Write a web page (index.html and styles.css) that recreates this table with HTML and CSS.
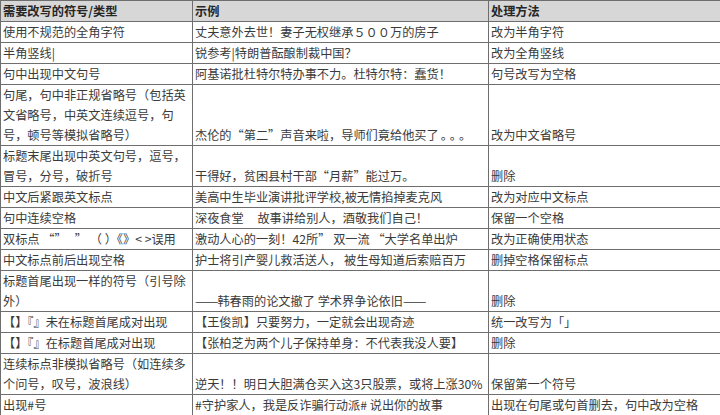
FILE: index.html
```html
<!DOCTYPE html>
<html lang="zh-CN">
<head>
<meta charset="utf-8">
<link rel="stylesheet" href="styles.css">
</head>
<body>
<table class="rules">
  <colgroup>
    <col class="c1"><col class="c2"><col class="c3">
  </colgroup>
  <thead>
    <tr class="head"><th>需要改写的符号/类型</th><th>示例</th><th>处理方法</th></tr>
  </thead>
  <tbody>
    <tr><td>使用不规范的全角字符</td><td>丈夫意外去世！妻子无权继承５００万的房子</td><td>改为半角字符</td></tr>
    <tr><td>半角竖线|</td><td>锐参考|特朗普酝酿制裁中国？</td><td>改为全角竖线</td></tr>
    <tr><td>句中出现中文句号</td><td>阿基诺批杜特尔特办事不力。杜特尔特：蠢货！</td><td>句号改写为空格</td></tr>
    <tr><td>句尾，句中非正规省略号（包括英<br>文省略号，中英文连续逗号，句<br>号，顿号等模拟省略号）</td><td>杰伦的“第二”声音来啦，导师们竟给他买了<span class="wide">。。。</span></td><td>改为中文省略号</td></tr>
    <tr><td>标题末尾出现中英文句号，逗号，<br>冒号，分号，破折号</td><td>干得好，贫困县村干部“月薪”能过万。</td><td>删除</td></tr>
    <tr><td>中文后紧跟英文标点</td><td>美高中生毕业演讲批评学校,被无情掐掉麦克风</td><td>改为对应中文标点</td></tr>
    <tr><td>句中连续空格</td><td>深夜食堂&nbsp;&nbsp;&nbsp;&nbsp;&nbsp;故事讲给别人，酒敬我们自己！</td><td>保留一个空格</td></tr>
    <tr><td>双标点 “”&nbsp;&nbsp;&nbsp;” （ ）《》&lt; &gt;误用</td><td>激动人心的一刻！42所” 双一流 “大学名单出炉</td><td>改为正确使用状态</td></tr>
    <tr><td>中文标点前后出现空格</td><td>护士将引产婴儿救活送人， 被生母知道后索赔百万</td><td>删掉空格保留标点</td></tr>
    <tr><td>标题首尾出现一样的符号（引号除<br>外）</td><td><span class="dash">——</span>韩春雨的论文撤了 学术界争论依旧<span class="dash">——</span></td><td>删除</td></tr>
    <tr><td>【】『』未在标题首尾成对出现</td><td>【王俊凯】只要努力，一定就会出现奇迹</td><td>统一改写为「」</td></tr>
    <tr><td>【】『』在标题首尾成对出现</td><td>【张柏芝为两个儿子保持单身：不代表我没人要】</td><td>删除</td></tr>
    <tr><td>连续标点非模拟省略号（如连续多<br>个问号，叹号，波浪线）</td><td>逆天！！明日大胆满仓买入这3只股票，或将上涨30%</td><td>保留第一个符号</td></tr>
    <tr><td>出现#号</td><td>#守护家人，我是反诈骗行动派# 说出你的故事</td><td>出现在句尾或句首删去，句中改为空格</td></tr>
  </tbody>
</table>
</body>
</html>
```
FILE: styles.css
```css
html, body {
  margin: 0;
  padding: 0;
  background: #ffffff;
}
body {
  width: 720px;
  height: 415px;
  overflow: hidden;
  font-family: "Noto Sans CJK SC", "Noto Sans", sans-serif;
  font-size: 12.2px;
  color: #3a3a3a;
}
.rules {
  border-collapse: collapse;
  table-layout: fixed;
  width: 720px;
}
.c1 { width: 192px; }
.c2 { width: 296px; }
.c3 { width: 232px; }
.rules th,
.rules td {
  border: 1px solid #6e6e6e;
  padding: 0 0 0 2px;
  line-height: 20px;
  height: 20px;
  white-space: nowrap;
  overflow: hidden;
  text-align: left;
  vertical-align: bottom;
}
.head th {
  background: #d7d7d7;
  font-weight: bold;
  color: #262626;
}
.wide {
  letter-spacing: 3px;
  margin-left: 2px;
}
.dash {
  letter-spacing: -1px;
  display: inline-block;
  transform: scaleX(1.15);
  transform-origin: left center;
  margin-right: 3px;
}
```
